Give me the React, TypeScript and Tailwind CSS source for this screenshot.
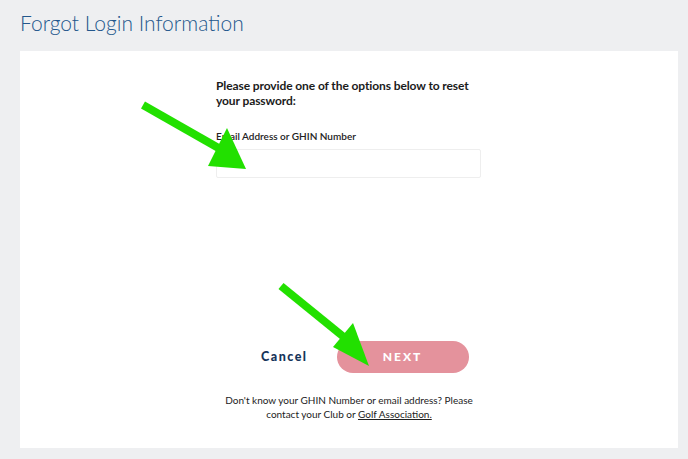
import React from 'react';

function Arrow({ x1, y1, x2, y2, a, b, tip }: { x1: number; y1: number; x2: number; y2: number; a: [number, number]; b: [number, number]; tip: [number, number] }) {
  return (
    <g>
      <line x1={x1} y1={y1} x2={x2} y2={y2} stroke="#22e000" strokeWidth={8} />
      <polygon points={`${a[0]},${a[1]} ${b[0]},${b[1]} ${tip[0]},${tip[1]}`} fill="#22e000" />
    </g>
  );
}

export default function App() {
  return (
    <div className="relative w-[688px] h-[459px] bg-[#eeeff1] overflow-hidden" style={{ fontFamily: 'Lato, "Open Sans", sans-serif' }}>
      <div className="px-5 pt-[8px]">
        <h1 className="text-[21px] leading-[30px] font-light text-[#23578c]">Forgot Login Information</h1>
      </div>

      <div className="mx-5 mt-[13px] h-[397px] w-[658px] bg-white flex flex-col items-center">
        <div className="w-[266px] pt-[27px]">
          <p className="text-[12px] leading-[15px] font-bold text-[#1b1b1b] tracking-[-0.1px]">
            Please provide one of the options below to reset
            <br />
            your password:
          </p>
          <label className="block mt-[22px] text-[10px] leading-[13px] font-semibold text-[#222]">Email Address or GHIN Number</label>
          <div className="mt-[6px] h-[29px] w-[265px] border border-[#eeeeee] rounded-[2px]" />
        </div>

        <div className="mt-[163px] w-[266px] flex items-center">
          <button className="ml-[45px] text-[12.5px] font-black tracking-[1.5px] text-[#16345a]">Cancel</button>
          <button className="ml-[29px] h-[32px] w-[132px] rounded-[16px] bg-[#e4929c] text-white text-[12px] font-black tracking-[2px]">NEXT</button>
        </div>

        <p className="mt-[20px] text-center text-[10px] leading-[14px] text-[#222]">
          Don't know your GHIN Number or email address? Please
          <br />
          contact your Club or <span className="underline">Golf Association.</span>
        </p>
      </div>

      <svg className="absolute left-0 top-0" width={688} height={459}>
        <Arrow x1={143} y1={105} x2={222} y2={150} a={[227, 128]} b={[208, 166]} tip={[246, 169]} />
        <Arrow x1={281} y1={286} x2={345} y2={338} a={[353, 323]} b={[333, 347]} tip={[369, 366]} />
      </svg>
    </div>
  );
}
